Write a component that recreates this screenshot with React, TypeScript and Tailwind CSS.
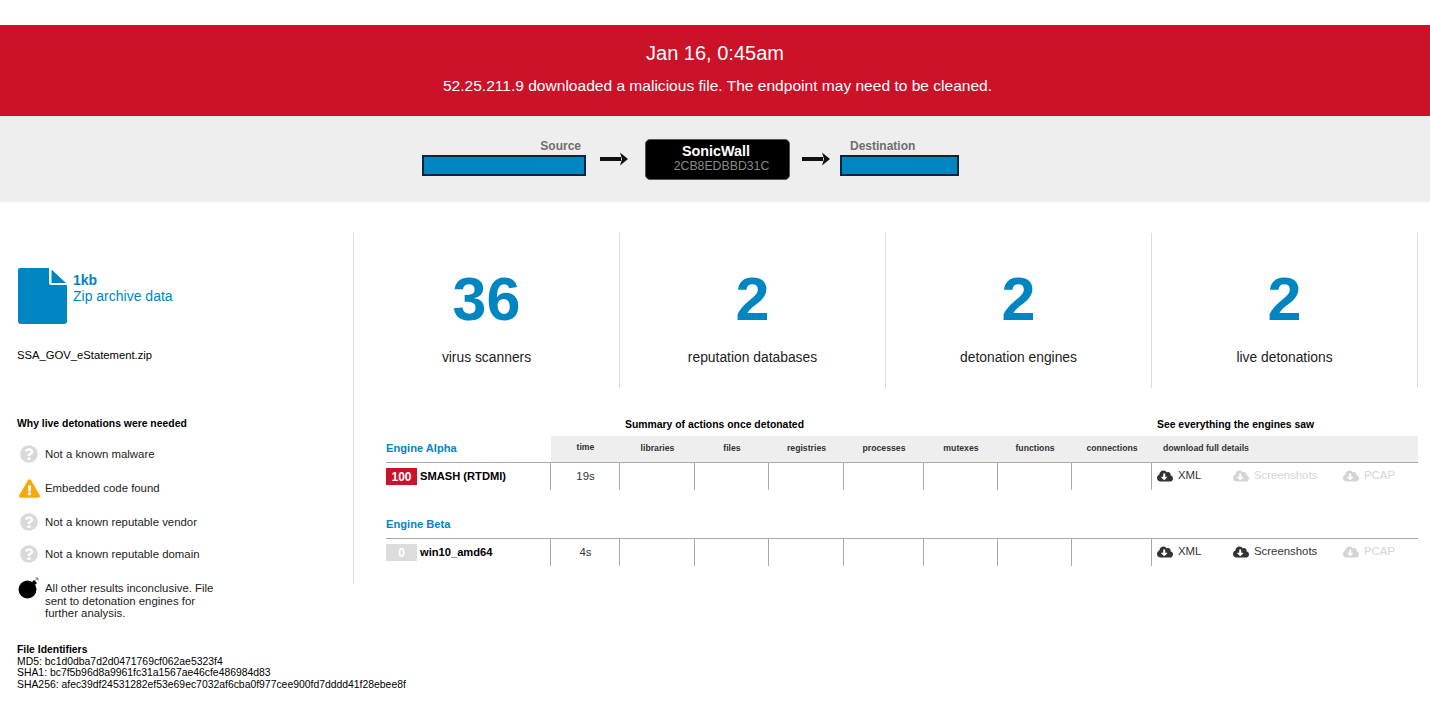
import { FaCloudDownloadAlt, FaExclamationTriangle, FaQuestionCircle } from "react-icons/fa";

const stats = [
  { value: "36", label: "virus scanners" },
  { value: "2", label: "reputation databases" },
  { value: "2", label: "detonation engines" },
  { value: "2", label: "live detonations" },
];

const columns = ["libraries", "files", "registries", "processes", "mutexes", "functions", "connections"];

const gridCols = "grid grid-cols-[165px_69px_75px_74px_75px_80px_74px_74px_80px_266px]";

function Arrow() {
  return (
    <svg width="28" height="14" viewBox="0 0 28 14" className="shrink-0">
      <path d="M0 5h21v4H0z" fill="#111" />
      <path d="M20 0.5 28 7l-8 6.5 2-6.5z" fill="#111" />
    </svg>
  );
}

function FileIcon() {
  return (
    <svg width="49" height="56" viewBox="0 0 49 56" className="shrink-0">
      <path d="M2 0h29v15a2 2 0 0 0 2 2h16v36a3 3 0 0 1-3 3H3a3 3 0 0 1-3-3V2a2 2 0 0 1 2-2z" fill="#0085c3" />
      <path d="M33.5 1.5 48 15H33.5z" fill="#0085c3" />
    </svg>
  );
}

function Bomb() {
  return (
    <svg width="22" height="22" viewBox="0 0 22 22" className="shrink-0">
      <circle cx="9.5" cy="12.5" r="9" fill="#000" />
      <path d="M14 5l2-2 3 3-2 2z" fill="#000" />
      <path d="M17 3.5 20 1M20 1h-2.5M20 1v2.5" stroke="#777" strokeWidth="1" fill="none" />
    </svg>
  );
}

function Reason({ icon, text, className }: { icon: React.ReactNode; text: string; className?: string }) {
  return (
    <div className={`flex h-[34px] items-center ${className ?? ""}`}>
      <div className="mr-[4px] flex w-[24px] justify-center">{icon}</div>
      <p className="text-[11.4px] leading-[14px] text-[#222]">{text}</p>
    </div>
  );
}

function Download({ label, on, width }: { label: string; on: boolean; width: string }) {
  return (
    <div className={`flex items-center gap-[5px] ${width} ${on ? "text-[#333]" : "text-[#d4d4d4]"}`}>
      <FaCloudDownloadAlt className="text-[16px]" />
      <span className="text-[11.4px]">{label}</span>
    </div>
  );
}

function EngineRow({ score, name, time, badge, shots }: { score: string; name: string; time: string; badge: string; shots: boolean }) {
  return (
    <div className={`${gridCols} h-[28px] border-t border-[#aaa]`}>
      <div className="flex items-start gap-[3px] border-r border-[#aaa] pt-[5px]">
        <span className={`flex h-[17px] w-[31px] items-center justify-center text-[12px] font-bold text-white ${badge}`}>{score}</span>
        <span className="text-[11.15px] leading-[17px] font-bold text-black">{name}</span>
      </div>
      <div className="border-r border-[#aaa] pt-[5px] pl-px text-center text-[11.4px] leading-[16px] text-[#333]">{time}</div>
      {columns.map((c) => (
        <div key={c} className="border-r border-[#aaa]" />
      ))}
      <div className="flex items-center pb-px pl-[5px]">
        <Download label="XML" on width="w-[76px]" />
        <Download label="Screenshots" on={shots} width="w-[110px]" />
        <Download label="PCAP" on={false} width="w-[70px]" />
      </div>
    </div>
  );
}

export default function App() {
  return (
    <div className="min-h-[702px] bg-white pt-[25px] font-['Liberation_Sans',Arial,sans-serif]">
      {/* alert banner */}
      <div className="flex h-[91px] flex-col items-center bg-[#cb1228] pt-[15px] text-white">
        <h1 className="text-[20px] leading-[27px]">Jan 16, 0:45am</h1>
        <p className="mt-[9px] pl-[5px] text-[15.55px] leading-[20px]">52.25.211.9 downloaded a malicious file. The endpoint may need to be cleaned.</p>
      </div>

      {/* path */}
      <div className="flex h-[86px] items-start justify-center bg-[#eeeeee] pt-[22px] pr-[49px]">
        <div className="flex w-[164px] flex-col items-end pt-px">
          <span className="pr-[5px] text-[12px] leading-[14px] font-bold text-[#6e6e6e]">Source</span>
          <div className="mt-[2px] h-[21px] w-full border-2 border-[#04263a] bg-[#0085c3]" />
        </div>
        <div className="mt-[14px] mr-[17px] ml-[14px]">
          <Arrow />
        </div>
        <div className="mt-px flex h-[41px] w-[145px] flex-col items-center rounded-[5px] border border-[#555] bg-black pt-[4px]">
          <span className="pr-[3px] text-[14.4px] leading-[15px] font-bold text-white">SonicWall</span>
          <span className="pl-[8px] text-[12.3px] leading-[14px] text-[#8a8a8a]">2CB8EDBBD31C</span>
        </div>
        <div className="mt-[14px] mr-[10px] ml-[12px]">
          <Arrow />
        </div>
        <div className="flex w-[119px] flex-col items-start pt-px">
          <span className="pl-[10px] text-[12px] leading-[14px] font-bold text-[#6e6e6e]">Destination</span>
          <div className="mt-[2px] h-[21px] w-full border-2 border-[#04263a] bg-[#0085c3]" />
        </div>
      </div>

      <div className="flex pt-[31px]">
        {/* file summary */}
        <div className="h-[351px] w-[354px] shrink-0 border-r border-[#ddd] pl-[17px]">
          <div className="flex pt-[35px] pl-px">
            <FileIcon />
            <div className="ml-[6px] text-[14px] leading-[16px] text-[#0085c3]">
              <p className="mt-[4px] font-bold">1kb</p>
              <p>Zip archive data</p>
            </div>
          </div>
          <p className="mt-[25px] text-[11.25px] leading-[13px] text-black">SSA_GOV_eStatement.zip</p>

          <p className="mt-[55px] text-[10.4px] leading-[13px] font-bold text-black">Why live detonations were needed</p>
          <div className="mt-[7px] flex flex-col">
            <Reason icon={<FaQuestionCircle className="text-[18px] text-[#d9d9d9]" />} text="Not a known malware" />
            <Reason icon={<FaExclamationTriangle className="text-[21px] text-[#f5a90f]" />} text="Embedded code found" />
            <Reason icon={<FaQuestionCircle className="text-[18px] text-[#d9d9d9]" />} text="Not a known reputable vendor" />
            <Reason icon={<FaQuestionCircle className="text-[18px] text-[#d9d9d9]" />} text="Not a known reputable domain" className="-mt-[2px]" />
          </div>
          <div className="mt-[11px] flex">
            <div className="-mt-[5px] w-[28px] pl-px">
              <Bomb />
            </div>
            <p className="w-[175px] text-[11.4px] leading-[12.5px] text-[#222]">All other results inconclusive. File sent to detonation engines for further analysis.</p>
          </div>
        </div>

        <div className="w-[1064px] shrink-0">
          {/* counters */}
          <div className="grid grid-cols-4">
            {stats.map((s) => (
              <div key={s.label} className="flex h-[155px] flex-col items-center border-r border-[#ddd] pt-[31px]">
                <span className="text-[61px] leading-[70px] font-bold text-[#0085c3]">{s.value}</span>
                <span className="mt-[14px] text-[13.85px] leading-[18px] text-[#222]">{s.label}</span>
              </div>
            ))}
          </div>

          {/* engines table */}
          <div className="mt-[29px] ml-[32px] w-[1032px]">
            <div className={`${gridCols} h-[19px]`}>
              <div className="col-span-2" />
              <p className="col-span-7 pt-px pl-[5px] text-[10.4px] leading-[13px] font-bold text-black">Summary of actions once detonated</p>
              <p className="pt-px pl-[5px] text-[10.4px] leading-[13px] font-bold text-black">See everything the engines saw</p>
            </div>
            <div className={`${gridCols} h-[26px]`}>
              <p className="pt-[4px] text-[11.15px] leading-[16px] font-bold text-[#0085c3]">Engine Alpha</p>
              <div className="flex items-center justify-center bg-[#eeeeee] pb-[2px] text-[8.7px] font-bold text-[#333]">time</div>
              {columns.map((c) => (
                <div key={c} className="flex items-center justify-center bg-[#eeeeee] text-[8.7px] font-bold text-[#333]">{c}</div>
              ))}
              <div className="flex items-center bg-[#eeeeee] pl-[11px] text-[8.7px] font-bold text-[#333]">download full details</div>
            </div>
            <EngineRow score="100" name="SMASH (RTDMI)" time="19s" badge="bg-[#cb1228]" shots={false} />
            <p className="mt-[26px] h-[22px] text-[11.15px] leading-[16px] font-bold text-[#0085c3]">Engine Beta</p>
            <EngineRow score="0" name="win10_amd64" time="4s" badge="bg-[#dcdcdc]" shots />
          </div>
        </div>
      </div>

      {/* hashes */}
      <div className="mt-[60px] pb-[13px] pl-[17px] text-[10.4px] leading-[11.5px] text-black">
        <p className="font-bold">File Identifiers</p>
        <p>MD5: bc1d0dba7d2d0471769cf062ae5323f4</p>
        <p>SHA1: bc7f5b96d8a9961fc31a1567ae46cfe486984d83</p>
        <p>SHA256: afec39df24531282ef53e69ec7032af6cba0f977cee900fd7dddd41f28ebee8f</p>
      </div>
    </div>
  );
}
